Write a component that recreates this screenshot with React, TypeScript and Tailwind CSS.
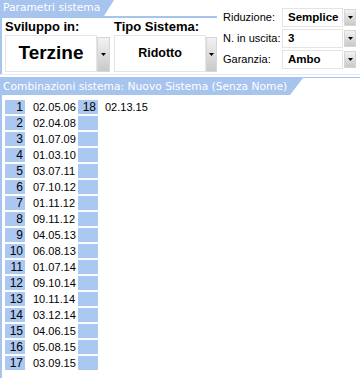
import React from "react";

// righe del sistema: [numero, combinazione]
const ROWS: [number, string][] = [
  [1, "02.05.06"],
  [2, "02.04.08"],
  [3, "01.07.09"],
  [4, "01.03.10"],
  [5, "03.07.11"],
  [6, "07.10.12"],
  [7, "01.11.12"],
  [8, "09.11.12"],
  [9, "04.05.13"],
  [10, "06.08.13"],
  [11, "01.07.14"],
  [12, "09.10.14"],
  [13, "10.11.14"],
  [14, "03.12.14"],
  [15, "04.06.15"],
  [16, "05.08.15"],
  [17, "03.09.15"],
];

const SECOND_COL: Record<number, string> = { 1: "02.13.15" };

function DropButton({ className }: { className: string }) {
  return (
    <div
      className={`flex items-center justify-center bg-gradient-to-b from-[#f2f2f2] to-[#c9c9c9] border border-[#d6d6d6] ${className}`}
    >
      <svg width="5" height="3" viewBox="0 0 5 3">
        <path d="M0 0h5L2.5 3z" fill="#000" />
      </svg>
    </div>
  );
}

function BigSelect({
  label,
  value,
  valueClass,
  btnClass,
}: {
  label: string;
  value: string;
  valueClass: string;
  btnClass: string;
}) {
  return (
    <div className="flex flex-col">
      <div className="h-[17px] text-[13px] font-bold leading-[17px] text-black">
        {label}
      </div>
      <div className="flex h-[37px]">
        <div
          className={`w-[92px] flex items-center justify-center border border-[#e4e4e4] font-bold text-black ${valueClass}`}
        >
          {value}
        </div>
        <DropButton className={`mt-[2px] h-[35px] ${btnClass}`} />
      </div>
    </div>
  );
}

function SmallSelect({ label, value }: { label: string; value: string }) {
  return (
    <div className="flex h-[19px] items-center">
      <div className="w-[59px] text-[11px] text-black">{label}</div>
      <div className="w-[61px] h-full flex items-center pl-[5px] border border-[#e4e4e4] text-[11.5px] font-bold text-black overflow-hidden">
        {value}
      </div>
      <DropButton className="ml-[1px] w-[12px] h-[17px]" />
    </div>
  );
}

export default function App() {
  return (
    <div className="w-[360px] h-[378px] bg-white overflow-hidden font-['Liberation_Sans',Arial,sans-serif]">
      {/* ===== Parametri sistema ===== */}
      <div className="flex h-[75px] border-b border-[#e3ebf7]">
        <div className="w-[217px] flex flex-col">
          <div className="h-[18px] border-b-2 border-[#a7c4ee]">
            <div className="h-[16px] w-[114px] bg-[#a7c4ee] [clip-path:polygon(0_0,100%_0,calc(100%-10px)_100%,0_100%)] pl-[3px] text-white text-[10.7px] leading-[16px] font-['DejaVu_Sans',Verdana,sans-serif]">
              Parametri sistema
            </div>
          </div>
          <div className="flex-1 flex border-l-2 border-[#a7c4ee] pl-[3px]">
            <BigSelect
              label="Sviluppo in:"
              value="Terzine"
              valueClass="text-[19px]"
              btnClass="w-[13px]"
            />
            <div className="ml-[4px]">
              <BigSelect
                label="Tipo Sistema:"
                value="Ridotto"
                valueClass="text-[12.5px]"
                btnClass="w-[11px]"
              />
            </div>
          </div>
        </div>
        <div className="ml-[6px] pt-[8px] flex flex-col gap-[2px]">
          <SmallSelect label="Riduzione:" value="Semplice" />
          <SmallSelect label="N. in uscita:" value="3" />
          <SmallSelect label="Garanzia:" value="Ambo" />
        </div>
      </div>

      {/* ===== Combinazioni sistema ===== */}
      <div className="mt-[2px] border-t border-[#a7c4ee]">
        <div className="h-[17px] w-[303px] bg-[#a7c4ee] [clip-path:polygon(0_0,100%_0,calc(100%-13px)_100%,0_100%)] pl-[3px] text-white text-[10.7px] leading-[17px] font-['DejaVu_Sans',Verdana,sans-serif]">
          Combinazioni sistema: Nuovo Sistema (Senza Nome)
        </div>
        <div className="h-[300px] border-l-2 border-[#a7c4ee] pl-[3px] pt-[5px]">
          <div className="grid grid-cols-[20px_53px_20px_1fr] gap-y-[2px] text-[11px] text-black">
            {ROWS.map(([n, combo]) => (
              <React.Fragment key={n}>
                <div className="h-[14px] bg-[#abc8f2] text-right pr-[2px] text-[12px] leading-[14px]">
                  {n}
                </div>
                <div className="h-[14px] pl-[8px] leading-[14px]">{combo}</div>
                <div className="h-[14px] bg-[#abc8f2] text-right pr-[2px] text-[12px] leading-[14px]">
                  {n === 1 ? 18 : ""}
                </div>
                <div className="h-[14px] pl-[7px] leading-[14px]">
                  {SECOND_COL[n] ?? ""}
                </div>
              </React.Fragment>
            ))}
          </div>
        </div>
      </div>
    </div>
  );
}
